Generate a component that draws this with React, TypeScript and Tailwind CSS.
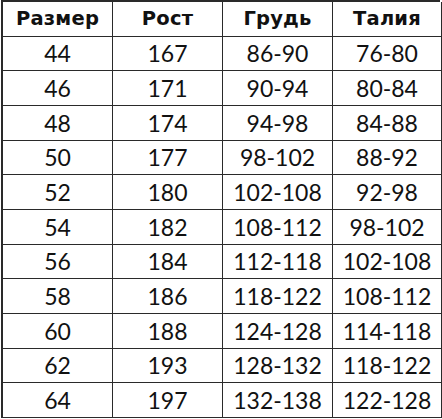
import React from 'react';

const header = ['Размер', 'Рост', 'Грудь', 'Талия'];

const rows: string[][] = [
  ['44', '167', '86-90', '76-80'],
  ['46', '171', '90-94', '80-84'],
  ['48', '174', '94-98', '84-88'],
  ['50', '177', '98-102', '88-92'],
  ['52', '180', '102-108', '92-98'],
  ['54', '182', '108-112', '98-102'],
  ['56', '184', '112-118', '102-108'],
  ['58', '186', '118-122', '108-112'],
  ['60', '188', '124-128', '114-118'],
  ['62', '193', '128-132', '118-122'],
  ['64', '197', '132-138', '122-128'],
];

export default function App() {
  return (
    <div className="w-[442px] h-[419px] bg-white pl-px">
      <div className="grid grid-cols-[110px_110px_110px_109px] auto-rows-[34.67px] w-[439px] border-l-2 border-t-2 border-[#2a2a2a]">
        {header.map((h) => (
          <div
            key={h}
            className="flex items-center justify-center border-r border-b border-[#2a2a2a] text-[19.5px] font-bold text-[#111] font-['DejaVu_Sans',sans-serif] tracking-[0.2px]"
          >
            {h}
          </div>
        ))}
        {rows.map((r, i) =>
          r.map((c, j) => (
            <div
              key={i + '-' + j}
              className="flex items-center justify-center border-r border-b border-[#2a2a2a] text-[23px] text-[#111] font-['Lato',sans-serif] leading-none pt-px"
            >
              {c}
            </div>
          ))
        )}
      </div>
    </div>
  );
}
